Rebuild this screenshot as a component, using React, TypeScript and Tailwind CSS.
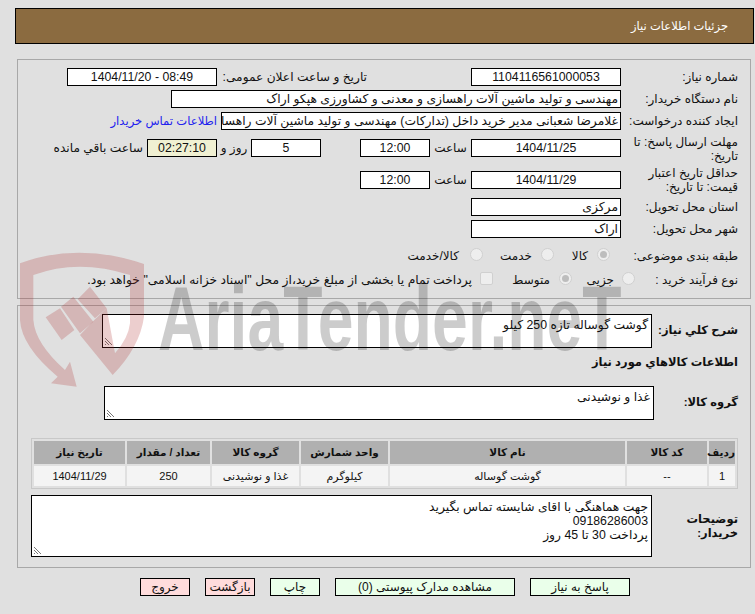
import type { ReactNode } from 'react';

function Box({ w, children, align = 'center', className = 'bg-white' }: { w: string; children?: ReactNode; align?: string; className?: string }) {
  return (
    <div className={`${w} h-[18px] shrink-0 border border-black text-[12.3px] leading-[16px] overflow-hidden whitespace-nowrap ${align === 'center' ? 'text-center' : 'text-right pr-[2px]'} ${className}`}>
      {children}
    </div>
  );
}

function Label({ children, w = 'w-[129px]' }: { children: ReactNode; w?: string }) {
  return <div className={`${w} shrink-0 text-[12px] leading-[14px] pr-[12px]`}>{children}</div>;
}

function Radio({ checked }: { checked?: boolean }) {
  return (
    <span className="inline-flex w-[13px] h-[13px] -mt-[4px] rounded-full border border-[#d0d0d0] bg-[#eeeeee] items-center justify-center shrink-0">
      {checked && <span className="w-[7px] h-[7px] rounded-full bg-[#bdbdbd]" />}
    </span>
  );
}

function Grip() {
  return (
    <svg className="absolute left-[1px] bottom-[1px]" width="9" height="9" viewBox="0 0 9 9">
      <path d="M1 1L8 8M1 4L5 8M1 7L2 8" stroke="#777" strokeWidth="1" fill="none" />
    </svg>
  );
}

function Area({ w, h, children, pad = 'pt-[3px]' }: { w: string; h: string; children?: ReactNode; pad?: string }) {
  return (
    <div className={`${w} ${h} ${pad} relative shrink-0 border border-black bg-white text-[12.3px] leading-[14px] pr-[3px]`}>
      {children}
      <Grip />
    </div>
  );
}

function Button({ w, tone, children }: { w: string; tone: 'green' | 'red'; children: ReactNode }) {
  return (
    <button className={`${w} h-[18px] shrink-0 border border-black text-[12px] leading-[15px] whitespace-nowrap ${tone === 'green' ? 'bg-[#eaffea]' : 'bg-[#ffdcdc]'}`}>
      {children}
    </button>
  );
}

const headers = [
  { t: 'رديف', w: 'w-[26px]' },
  { t: 'کد کالا', w: 'w-[80px]' },
  { t: 'نام کالا', w: 'w-[235px]' },
  { t: 'واحد شمارش', w: 'w-[87px]' },
  { t: 'گروه کالا', w: 'w-[87px]' },
  { t: 'تعداد / مقدار', w: 'w-[83px]' },
  { t: 'تاریخ نیاز', w: 'w-[91px]' },
];
const cells = ['1', '--', 'گوشت گوساله', 'کیلوگرم', 'غذا و نوشیدنی', '250', '1404/11/29'];

export default function App() {
  return (
    <div dir="rtl" className="relative w-[755px] h-[614px] overflow-hidden bg-[#e0e0e0] text-[#111] font-['Liberation_Sans','DejaVu_Sans',sans-serif]">
      <div className="pt-[8px]">
        <div className="h-[36px] ml-[15px] mr-[1px] border border-black bg-[#8b6b40] text-white text-[11.5px] leading-[34px] pr-[25px]">
          جزئیات اطلاعات نیاز
        </div>

        <div className="mt-[15px] ml-[17px] mr-[4px] h-[240px] border border-[#a8a8a8] pt-[8px]">
          <div className="flex items-center h-[18px]">
            <Label>شماره نیاز:</Label>
            <Box w="w-[150px]">1104116561000053</Box>
            <div className="w-[150px] mr-[104px] shrink-0 text-[12.2px] whitespace-nowrap">تاریخ و ساعت اعلان عمومی:</div>
            <Box w="w-[150px]"><span dir="ltr">1404/11/20 - 08:49</span></Box>
          </div>
          <div className="flex items-center h-[18px] mt-[4px]">
            <Label>نام دستگاه خریدار:</Label>
            <Box w="w-[450px]" align="right">مهندسی و تولید ماشین آلات راهسازی و معدنی و کشاورزی هپکو اراک</Box>
          </div>
          <div className="flex items-center h-[18px] mt-[4px]">
            <Label>ایجاد کننده درخواست:</Label>
            <Box w="w-[400px]" align="right">غلامرضا شعبانی مدیر خرید داخل (تدارکات) مهندسی و تولید ماشین آلات راهسازی و معدنی</Box>
            <div className="text-[11.6px] text-[#2222ee] mr-[4px] whitespace-nowrap">اطلاعات تماس خریدار</div>
          </div>
          <div className="flex items-start h-[30px] mt-[5px]">
            <Label>مهلت ارسال پاسخ: تا تاریخ:</Label>
            <div className="flex items-center mt-[4px]">
              <Box w="w-[150px]">1404/11/25</Box>
              <div className="w-[41px] text-[12px] text-center">ساعت</div>
              <Box w="w-[70px]">12:00</Box>
              <div className="w-[39px]" />
              <Box w="w-[70px]">5</Box>
              <div className="w-[34px] text-[12px] text-center whitespace-nowrap">روز و</div>
              <Box w="w-[70px]" className="bg-[#f0f0d2]">02:27:10</Box>
              <div className="text-[12.2px] mr-[4px] whitespace-nowrap">ساعت باقي مانده</div>
            </div>
          </div>
          <div className="flex items-start h-[30px] mt-[1px]">
            <Label>حداقل تاریخ اعتبار قیمت: تا تاریخ:</Label>
            <div className="flex items-center mt-[5px]">
              <Box w="w-[150px]">1404/11/29</Box>
              <div className="w-[41px] text-[12px] text-center">ساعت</div>
              <Box w="w-[70px]">12:00</Box>
            </div>
          </div>
          <div className="flex items-center h-[18px] mt-[2px]">
            <Label>استان محل تحویل:</Label>
            <Box w="w-[150px]" align="right">مرکزی</Box>
          </div>
          <div className="flex items-center h-[18px] mt-[4px]">
            <Label>شهر محل تحویل:</Label>
            <Box w="w-[150px]" align="right">اراک</Box>
          </div>
          <div className="flex items-center h-[18px] mt-[9px] text-[12px]">
            <Label>طبقه بندی موضوعی:</Label>
            <div className="mr-[11px] flex"><Radio checked /></div>
            <span className="pr-[9px] w-[43px] whitespace-nowrap">کالا</span>
            <Radio />
            <span className="pr-[9px] w-[58px] whitespace-nowrap">خدمت</span>
            <Radio />
            <span className="pr-[11px] whitespace-nowrap">کالا/خدمت</span>
          </div>
          <div className="flex items-center h-[18px] mt-[6px] text-[12px]">
            <Label w="w-[115px]">نوع فرآیند خرید :</Label>
            <Radio />
            <span className="pr-[8px] w-[50px] whitespace-nowrap">جزیی</span>
            <Radio checked />
            <span className="pr-[9px] w-[66px] whitespace-nowrap">متوسط</span>
            <span className="w-[13px] h-[13px] -mt-[4px] shrink-0 border border-[#d0d0d0] bg-[#eeeeee] rounded-[2px]" />
            <span className="pr-[8px] whitespace-nowrap text-[12.35px]">پرداخت تمام یا بخشی از مبلغ خرید،از محل "اسناد خزانه اسلامی" خواهد بود.</span>
          </div>
        </div>

        <div className="mt-[6px] ml-[17px] mr-[4px] h-[263px] border border-[#a8a8a8] pt-[8px]">
          <div className="flex items-center">
            <div className="w-[98px] shrink-0 text-[11.5px] font-bold pr-[12px] whitespace-nowrap">شرح کلي نیاز:</div>
            <Area w="w-[550px]" h="h-[34px]">گوشت گوساله تازه 250 کیلو</Area>
          </div>
          <div className="h-[28px] text-[11.5px] font-bold leading-[28px] pr-[12px]">اطلاعات کالاهاي مورد نیاز</div>
          <div className="flex items-center mt-[10px]">
            <div className="w-[96px] shrink-0 text-[11.5px] font-bold pr-[12px] whitespace-nowrap">گروه کالا:</div>
            <Area w="w-[550px]" h="h-[34px]">غذا و نوشیدنی</Area>
          </div>
          <div className="mt-[18px] mr-[12px] w-[707px] h-[51px] border border-[#c8c8c8] p-[2px]">
            <div className="flex gap-[2px] h-[23px]">
              {headers.map((h) => (
                <div key={h.t} className={`${h.w} bg-[#b0b0b0] text-[10.5px] font-bold text-center leading-[23px] whitespace-nowrap`}>{h.t}</div>
              ))}
            </div>
            <div className="flex gap-[2px] h-[20px] mt-[2px]">
              {headers.map((h, i) => (
                <div key={h.t} className={`${h.w} bg-[#f4f4f4] text-[11px] text-center leading-[20px] whitespace-nowrap`}>{cells[i]}</div>
              ))}
            </div>
          </div>
          <div className="flex items-center mt-[6px]">
            <div className="w-[98px] shrink-0 text-[11.5px] font-bold leading-[14px] pr-[12px] pl-[30px]">توضیحات خریدار:</div>
            <Area w="w-[621px]" h="h-[62px]" pad="pt-[4px]">
              <div>جهت هماهنگی با اقای شایسته تماس بگیرید</div>
              <div>09186286003</div>
              <div>پرداخت 30 تا 45 روز</div>
            </Area>
          </div>
        </div>

        <div className="flex gap-[15px] mt-[10px] mr-[125px]">
          <Button w="w-[100px]" tone="green">پاسخ به نیاز</Button>
          <Button w="w-[180px]" tone="green">مشاهده مدارک پیوستی (0)</Button>
          <Button w="w-[50px]" tone="green">چاپ</Button>
          <Button w="w-[50px]" tone="red">بازگشت</Button>
          <Button w="w-[50px]" tone="red">خروج</Button>
        </div>
      </div>

      {/* watermark lies over the page */}
      <div dir="ltr" className="absolute left-0 top-0 w-full h-full pointer-events-none">
        <svg className="absolute left-[15px] top-[240px]" width="360" height="150" viewBox="0 0 1080 450">
          <path
            fill="rgba(170,30,30,0.22)"
            d="M15 70Q190 5 387 72L387 230Q375 320 293 405L195 285L238 240L275 205L300 340Q340 295 345 250L345 105Q190 55 55 105L55 240Q60 310 150 390L165 365L185 440L108 430L128 410Q20 320 15 240Z"
          />
          <path fill="rgba(170,30,30,0.22)" d="M92 232L135 205L178 270L140 300Z M138 200L175 170L235 245L195 280Z M188 178L225 140L275 205L240 235Z" />
        </svg>
        <div className="absolute left-[158px] top-[274px] origin-left scale-x-[0.715] whitespace-nowrap text-[90px] leading-[90px] font-bold text-black/20">AriaTender.neT</div>
      </div>
    </div>
  );
}
